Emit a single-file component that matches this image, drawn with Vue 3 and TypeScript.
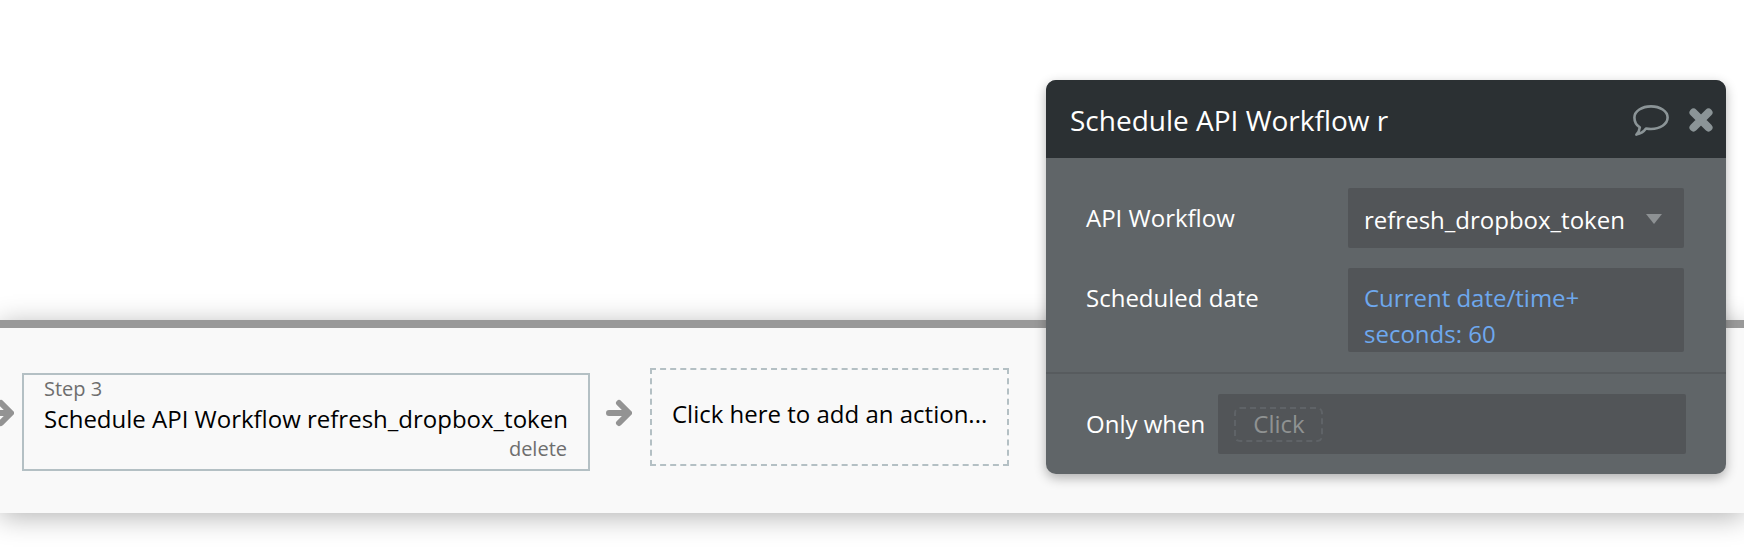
<script setup lang="ts">
const fields = [
  { label: 'API Workflow', value: 'refresh_dropbox_token' }
]
</script>

<template>
  <div class="page">
    <div class="canvas"></div>
    <div class="bar">
      <div class="steps">
        <svg class="arrow first" viewBox="0 0 26 28"><path d="M3 14H22M13 4L23 14L13 24" /></svg>
        <div class="step">
          <div class="step-num">Step 3</div>
          <div class="step-title">Schedule API Workflow refresh_dropbox_token</div>
          <div class="step-del">delete</div>
        </div>
        <svg class="arrow" viewBox="0 0 26 28"><path d="M3 14H22M13 4L23 14L13 24" /></svg>
        <div class="add">Click here to add an action...</div>
      </div>
    </div>

    <div class="panel">
      <div class="head">
        <span class="head-title">Schedule API Workflow r</span>
        <svg class="bubble" viewBox="0 0 36 31">
          <path d="M18 1.4C27 1.4 34.6 6 34.6 12.6C34.6 19.2 27 24 18 24C16.2 24 14.6 23.8 13 23.5C10.8 26.6 7.6 28.6 3.4 29.6C5.4 27.4 6.6 25.2 6.8 22.4C3.2 20.2 1.4 16.6 1.4 12.6C1.4 6 9 1.4 18 1.4Z" />
        </svg>
        <svg class="close" viewBox="0 0 24 24"><path d="M4.5 4.5L19.5 19.5M19.5 4.5L4.5 19.5" /></svg>
      </div>
      <div class="body">
        <div v-for="f in fields" :key="f.label" class="row">
          <div class="label">{{ f.label }}</div>
          <div class="field select">
            <span>{{ f.value }}</span>
            <i class="caret"></i>
          </div>
        </div>
        <div class="row">
          <div class="label">Scheduled date</div>
          <div class="field dyn">Current date/time+<br />seconds: 60</div>
        </div>
      </div>
      <div class="foot">
        <div class="label when">Only when</div>
        <div class="field cond"><span class="chip">Click</span></div>
      </div>
    </div>
  </div>
</template>

<style>
html, body {
  margin: 0;
  background: #fff;
}
</style>

<style scoped>
.page {
  position: relative;
  width: 1744px;
  height: 554px;
  overflow: hidden;
  background: #fff;
  font-family: "Open Sans", "Noto Sans", sans-serif;
}

.canvas {
  height: 320px;
}

.bar {
  height: 185px;
  border-top: 8px solid #999;
  background: #f9f9f9;
  box-shadow: 0 4px 26px rgba(0, 0, 0, 0.3);
}

.steps {
  display: flex;
  align-items: flex-start;
}

.arrow {
  flex: none;
  width: 26px;
  height: 28px;
  margin: 71px 18px 0 16px;
}

.arrow path {
  fill: none;
  stroke: #939393;
  stroke-width: 6;
  stroke-linecap: round;
  stroke-linejoin: round;
}

.arrow.first {
  margin: 71px 8px 0 -12px;
}

.step {
  box-sizing: border-box;
  flex: none;
  width: 568px;
  height: 98px;
  margin-top: 45px;
  padding: 0 21px 0 20px;
  border: 2px solid #b4c0c4;
  color: #000;
}

.step-num {
  margin-top: 1px;
  margin-bottom: -1px;
  font-size: 20px;
  line-height: 26px;
  color: #6e6e6e;
}

.step-title {
  font-size: 24px;
  line-height: 36px;
  white-space: nowrap;
}

.step-del {
  margin-top: -1px;
  font-size: 20px;
  line-height: 26px;
  text-align: right;
  color: #6e6e6e;
}

.add {
  box-sizing: border-box;
  flex: none;
  width: 359px;
  height: 98px;
  margin-top: 40px;
  padding-left: 20px;
  border: 2px dashed #b4c0c4;
  font-size: 24px;
  line-height: 88px;
  white-space: nowrap;
  color: #000;
}

.panel {
  position: absolute;
  left: 1046px;
  top: 80px;
  width: 680px;
  height: 394px;
  border-radius: 10px;
  overflow: hidden;
  background: #606568;
  box-shadow: 0 4px 12px rgba(0, 0, 0, 0.3);
}

.head {
  display: flex;
  align-items: center;
  height: 78px;
  padding: 2px 13px 0 24px;
  box-sizing: border-box;
  background: #2b3033;
}

.head-title {
  flex: 1;
  font-size: 28px;
  color: #fff;
}

.bubble {
  width: 36px;
  height: 31px;
  margin: 0 20px 0 0;
}

.bubble path {
  fill: none;
  stroke: #8b9497;
  stroke-width: 2.6;
  stroke-linejoin: round;
}

.close {
  width: 24px;
  height: 24px;
}

.close path {
  fill: none;
  stroke: #8b9497;
  stroke-width: 8;
  stroke-linecap: round;
}

.body {
  display: flex;
  flex-direction: column;
  gap: 20px;
  box-sizing: border-box;
  height: 216px;
  padding: 30px 42px 0 40px;
  border-bottom: 2px solid #575b5e;
}

.row {
  display: flex;
  align-items: flex-start;
}

.label {
  flex: none;
  width: 262px;
  font-size: 24px;
  color: #fff;
}

.row .label {
  padding-top: 13px;
}

.field {
  box-sizing: border-box;
  flex: 1;
  border-radius: 2px;
  background: #525558;
  font-size: 24px;
  padding-left: 16px;
}

.select {
  display: flex;
  align-items: center;
  justify-content: space-between;
  height: 60px;
  padding: 2px 22px 0 16px;
  color: #fff;
}

.caret {
  width: 0;
  height: 0;
  border-left: 8px solid transparent;
  border-right: 8px solid transparent;
  border-top: 10px solid #8d9193;
}

.dyn {
  height: 84px;
  overflow: hidden;
  padding-top: 12px;
  line-height: 36px;
  color: #6ea8ee;
}

.foot {
  display: flex;
  align-items: flex-start;
  padding: 20px 40px 0 40px;
}

.when {
  width: 132px;
  padding-top: 13px;
}

.cond {
  display: flex;
  align-items: center;
  height: 60px;
}

.chip {
  box-sizing: border-box;
  width: 89px;
  height: 35px;
  padding-left: 1px;
  border: 2px dashed #5f6367;
  border-radius: 6px;
  font-size: 24px;
  line-height: 29px;
  text-align: center;
  color: #8f9292;
}
</style>
